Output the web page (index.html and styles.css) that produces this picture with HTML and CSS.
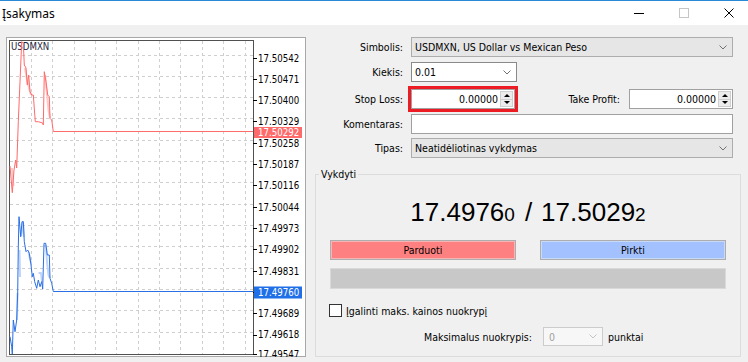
FILE: index.html
```html
<!DOCTYPE html>
<html lang="lt">
<head>
    <meta charset="UTF-8">
    <title>Įsakymas</title>
    <link rel="stylesheet" href="styles.css">
</head>
<body>
<div class="window">
    <div class="titlebar">
        <span class="title">Įsakymas</span>
        <div class="controls">
            <span class="ctl"><span class="ctl-min"></span></span>
            <span class="ctl"><span class="ctl-max"></span></span>
            <span class="ctl">
                <svg width="10" height="10" viewBox="0 0 10 10"><path d="M0.5 0.5L9.5 9.5M9.5 0.5L0.5 9.5" stroke="#000" stroke-width="1"/></svg>
            </span>
        </div>
    </div>

    <div class="content">
        <!-- Grafikas -->
        <div class="chart">
            <svg width="300" height="320" viewBox="6 37 300 320">
                <rect x="6.5" y="37.5" width="299" height="319" fill="#fff" stroke="#a8a8a8"/>
                <g stroke="#cfcfcf" stroke-dasharray="3 3" fill="none">
                    <path d="M31.5 41V354M52.5 41V354M74.5 41V354M95.5 41V354M116.5 41V354M138.5 41V354M159.5 41V354M180.5 41V354M202.5 41V354M223.5 41V354M245.5 41V354"/>
                    <path d="M10 55.5H253M10 76.5H253M10 97.5H253M10 118.5H253M10 140.5H253M10 161.5H253M10 182.5H253M10 204.5H253M10 225.5H253M10 246.5H253M10 268.5H253M10 289.5H253M10 310.5H253M10 332.5H253"/>
                </g>
                <rect x="9.5" y="40.5" width="244" height="314" fill="none" stroke="#505050"/>
                <path d="M253 58.5h4M253 79.5h4M253 100.5h4M253 121.5h4M253 143.5h4M253 164.5h4M253 185.5h4M253 207.5h4M253 228.5h4M253 249.5h4M253 271.5h4M253 292.5h4M253 313.5h4M253 335.5h4M253 354.5h4" stroke="#000"/>

                <g class="axis">
                    <text x="258" y="61.5">17.50542</text>
                    <text x="258" y="82.8">17.50471</text>
                    <text x="258" y="104.1">17.50400</text>
                    <text x="258" y="125.4">17.50329</text>
                    <text x="258" y="146.7">17.50258</text>
                    <text x="258" y="168">17.50187</text>
                    <text x="258" y="189.3">17.50116</text>
                    <text x="258" y="210.6">17.50044</text>
                    <text x="258" y="231.9">17.49973</text>
                    <text x="258" y="253.2">17.49902</text>
                    <text x="258" y="274.5">17.49831</text>
                    <text x="258" y="317.1">17.49689</text>
                    <text x="258" y="338.4">17.49618</text>
                    <text x="258" y="358">17.49547</text>
                </g>

                <text class="symbol" x="11" y="50">USDMXN</text>

                <g fill="none" stroke-width="2" stroke-linejoin="round">
                    <path stroke="#ffc9c9" d="M12 168L13.5 186M25 68L27 80L29 88L31 95M45 75L47 95L48.5 110L50 118"/>
                    <path stroke="#bfd4f7" d="M17 320L17.5 293M19.5 250L20 277M21 236L23 222L24 237M28.5 252L31 263M38.5 273L41 273L42 282M44 246L46 246L47 262L48.5 275L50 278"/>
                </g>
                <polyline fill="none" stroke="#ff6a6a" stroke-width="1" points="10,166 12.3,192.7 14,170 15.7,160 16.7,168 18.3,121.7 20,81.7 21.7,41.7 23.3,43 24.3,65 26,68 27.3,85 28.7,75 30,91.7 31.7,95 33.3,95 35.3,121.7 38.3,121.7 42.7,123 43.3,125 44.3,71.7 46,81.7 47.7,95 49.3,96.7 50,118.3 51.7,120 53.3,131.5 253,131.5"/>
                <polyline fill="none" stroke="#2a6fe4" stroke-width="1" points="10,336.7 11.7,346.7 12.3,354 13.3,320 15,331.7 16.7,320 17.7,293 18.3,246.7 19,216.7 20.7,236.7 22,221.7 23.3,221.7 24.3,241.7 26,251.7 27.7,250 29.3,253.3 31,265 32.3,276.7 33.3,273.3 34.7,281.7 36.7,288.3 38.3,280 40,286.7 41.7,281.7 42.7,289 44,243.3 45.7,243.3 47.3,255 49.3,255 50,278.3 51.7,283.3 53.3,291.5 253,291.5"/>

                <rect x="254" y="127" width="48" height="11" fill="#ff6b6b"/>
                <text class="axis tag" x="258" y="136.3">17.50292</text>
                <rect x="254" y="286.5" width="48" height="12" fill="#1f6fe8"/>
                <text class="axis tag" x="258" y="295.8">17.49760</text>
            </svg>
        </div>

        <!-- Užsakymo forma -->
        <div class="order-form">
            <div class="row">
                <span class="field-label">Simbolis:</span>
                <div class="combo combo-ro combo-wide">
                    <span class="combo-text">USDMXN, US Dollar vs Mexican Peso</span>
                    <svg width="8" height="5" viewBox="0 0 8 5"><path d="M0.5 0.5L4 4L7.5 0.5" fill="none" stroke="#707070"/></svg>
                </div>
            </div>
            <div class="row row-kiekis">
                <span class="field-label">Kiekis:</span>
                <div class="combo combo-kiekis">
                    <span class="combo-text">0.01</span>
                    <svg width="8" height="5" viewBox="0 0 8 5"><path d="M0.5 0.5L4 4L7.5 0.5" fill="none" stroke="#707070"/></svg>
                </div>
            </div>
            <div class="row">
                <span class="field-label">Stop Loss:</span>
                <div class="num-input highlight">
                    <span class="num-value">0.00000</span>
                    <span class="spin"><span class="spin-up"><i></i></span><span class="spin-down"><i></i></span></span>
                </div>
                <span class="tp-label">Take Profit:</span>
                <div class="num-input">
                    <span class="num-value">0.00000</span>
                    <span class="spin"><span class="spin-up"><i></i></span><span class="spin-down"><i></i></span></span>
                </div>
            </div>
            <div class="row row-komentaras">
                <span class="field-label">Komentaras:</span>
                <div class="text-input"></div>
            </div>
            <div class="row row-last">
                <span class="field-label">Tipas:</span>
                <div class="combo combo-ro combo-wide">
                    <span class="combo-text">Neatidėliotinas vykdymas</span>
                    <svg width="8" height="5" viewBox="0 0 8 5"><path d="M0.5 0.5L4 4L7.5 0.5" fill="none" stroke="#707070"/></svg>
                </div>
            </div>

            <fieldset class="group">
                <legend>Vykdyti</legend>
                <div class="price">17.4976<small>0</small><span class="sep">/</span>17.5029<small>2</small></div>
                <div class="trade-buttons">
                    <button class="btn btn-sell">Parduoti</button>
                    <button class="btn btn-buy">Pirkti</button>
                </div>
                <div class="status-bar"></div>
                <div class="check-row">
                    <span class="checkbox"></span>
                    <span>Įgalinti maks. kainos nuokrypį</span>
                </div>
                <div class="dev-row">
                    <span class="dev-label">Maksimalus nuokrypis:</span>
                    <div class="combo combo-disabled">
                        <span class="combo-text">0</span>
                        <svg width="8" height="5" viewBox="0 0 8 5"><path d="M0.5 0.5L4 4L7.5 0.5" fill="none" stroke="#c4c4c4"/></svg>
                    </div>
                    <span>punktai</span>
                </div>
            </fieldset>
        </div>
    </div>
</div>
</body>
</html>
```

FILE: styles.css
```css
body {
    margin: 0;
    background: #f0f0f0;
    font-family: "DejaVu Sans Condensed", "DejaVu Sans", sans-serif;
    font-size: 10.5px;
    color: #000;
}
.window {
    width: 748px;
    height: 362px;
    overflow: hidden;
    background: #f0f0f0;
}
.titlebar {
    height: 24px;
    border-top: 1px solid #2b88d8;
    background: #fff;
    display: flex;
    align-items: center;
}
.title {
    flex: 1;
    padding-left: 2px;
    font-family: "Noto Sans", sans-serif;
    font-size: 12px;
}
.controls {
    display: flex;
    height: 100%;
    margin-right: -3px;
}
.ctl {
    width: 45px;
    display: flex;
    align-items: center;
    justify-content: center;
}
.ctl svg {
    display: block;
}
.ctl-min {
    width: 10px;
    height: 1px;
    background: #000;
}
.ctl-max {
    width: 8px;
    height: 8px;
    border: 1px solid #c6c6c6;
}
.content {
    display: flex;
    padding: 12px 0 0 6px;
}
.chart svg {
    display: block;
}
.axis {
    font-family: "DejaVu Sans Condensed", "DejaVu Sans", sans-serif;
    font-size: 9.6px;
    fill: #000;
}
.tag {
    fill: #fff;
}
.symbol {
    font-family: "DejaVu Sans Condensed", "DejaVu Sans", sans-serif;
    font-size: 9.6px;
    fill: #1c2440;
}
.order-form {
    flex: 1;
    padding-right: 15px;
}
.row {
    display: flex;
    align-items: center;
    height: 20px;
    margin-bottom: 5px;
}
.row-kiekis {
    margin-bottom: 7px;
}
.row-komentaras {
    margin-bottom: 4px;
}
.row-last {
    margin-bottom: 0;
}
.field-label {
    flex: none;
    width: 97px;
    margin-right: 8px;
    text-align: right;
}
.combo {
    box-sizing: border-box;
    height: 20px;
    display: flex;
    align-items: center;
    padding: 0 5px 0 3px;
    border: 1px solid #adadad;
}
.combo svg {
    display: block;
}
.combo-text {
    flex: 1;
    white-space: nowrap;
}
.combo-ro {
    background: #e6e6e6;
}
.combo-wide {
    width: 322px;
}
.combo-kiekis {
    width: 106px;
    background: #fff;
    border-color: #8a8a8a;
}
.num-input {
    box-sizing: border-box;
    width: 104px;
    height: 20px;
    display: flex;
    border: 1px solid #a0a0a0;
    background: #fff;
}
.highlight {
    outline: 3px solid #ed1c24;
}
.num-value {
    flex: 1;
    text-align: right;
    line-height: 18px;
    padding-right: 2px;
}
.spin {
    width: 13px;
    margin: 1px 1px 1px 0;
    display: flex;
    flex-direction: column;
}
.spin > span {
    flex: 1;
    display: flex;
    align-items: center;
    justify-content: center;
    background: #ececec;
    border: 1px solid #cfcfcf;
}
.spin-down {
    border-top: none !important;
}
.spin-up i, .spin-down i {
    width: 0;
    height: 0;
    border-left: 3px solid transparent;
    border-right: 3px solid transparent;
}
.spin-up i {
    border-bottom: 3px solid #000;
}
.spin-down i {
    border-top: 3px solid #000;
}
.tp-label {
    flex: 1;
    text-align: right;
    margin-right: 9px;
}
.text-input {
    box-sizing: border-box;
    width: 322px;
    height: 20px;
    border: 1px solid #a0a0a0;
    background: #fff;
}
.group {
    margin: 10px -8px 0 9px;
    padding: 0 14px 10px;
    border: 1px solid #dcdcdc;
    min-width: 0;
}
.group legend {
    margin-left: -11px;
    padding: 0 2px;
    line-height: 12px;
}
.price {
    margin-top: 17px;
    height: 30px;
    line-height: 30px;
    text-align: center;
    font-family: "Liberation Sans", Arial, sans-serif;
    font-size: 26px;
}
.price small {
    font-size: 19px;
}
.price .sep {
    margin: 0 9px 0 10px;
}
.trade-buttons {
    display: flex;
    justify-content: space-between;
    margin-top: 13px;
}
.btn {
    box-sizing: border-box;
    width: 186px;
    height: 20px;
    padding: 0;
    border: 1px solid #adadad;
    font-family: inherit;
    font-size: 10.5px;
    color: #000;
}
.btn-sell {
    background: #ff8080;
    box-shadow: inset 0 0 0 1px #f6b4b4;
}
.btn-buy {
    background: #a3c1ff;
    box-shadow: inset 0 0 0 1px #c9daf8;
}
.status-bar {
    margin-top: 8px;
    height: 21px;
    box-sizing: border-box;
    background: #c8c8c8;
    border: 1px solid #d9d9d9;
}
.check-row {
    display: flex;
    align-items: center;
    height: 13px;
    margin-top: 15px;
    margin-left: -1px;
}
.checkbox {
    box-sizing: border-box;
    width: 13px;
    height: 13px;
    margin-right: 4px;
    border: 1px solid #333;
    background: #fff;
}
.dev-row {
    display: flex;
    align-items: center;
    height: 19px;
    margin-top: 10px;
    margin-left: 94px;
}
.dev-label {
    margin-right: 11px;
}
.combo-disabled {
    width: 60px;
    height: 19px;
    margin-right: 5px;
    padding-left: 5px;
    border-color: #cccccc;
    background: #f7f7f7;
    color: #a0a0a0;
}
```
